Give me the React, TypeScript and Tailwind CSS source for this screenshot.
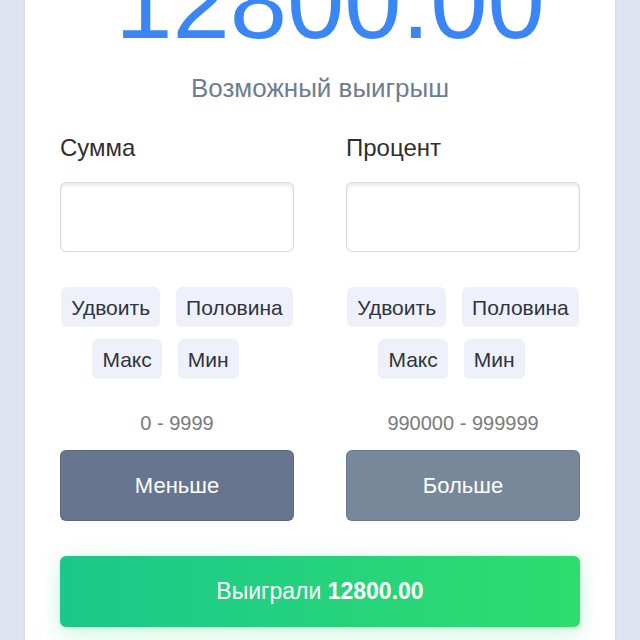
import React from "react"

function SmallButton({ label }: { label: string }) {
  return (
    <button className="h-10 rounded-md bg-[#eef0fa] px-[10px] text-[21px] leading-none text-[#2e3440]">
      {label}
    </button>
  )
}

function Column({
  label,
  range,
  action,
  actionClass,
}: {
  label: string
  range: string
  action: string
  actionClass: string
}) {
  return (
    <div className="flex flex-col">
      <div className="mt-[35px] text-[24px] leading-none text-[#2f2f2f]">{label}</div>
      <input
        className="mt-[22px] h-[70px] w-full rounded-md border border-[#d5d8dd] bg-white shadow-[inset_0_3px_3px_rgba(0,0,0,0.08)] outline-none"
        type="text"
      />
      <div className="mt-[35px] flex flex-col items-center gap-3">
        <div className="flex gap-4">
          <SmallButton label="Удвоить" />
          <SmallButton label="Половина" />
        </div>
        <div className="flex gap-4 pr-[23px]">
          <SmallButton label="Макс" />
          <SmallButton label="Мин" />
        </div>
      </div>
      <div className="mt-[34px] text-center text-[20px] leading-none text-[#7b7b7b]">{range}</div>
      <button
        className={`mt-[17px] h-[71px] w-full rounded-md border border-black/10 text-[22px] text-white ${actionClass}`}
      >
        {action}
      </button>
    </div>
  )
}

export default function App() {
  return (
    <div
      className="h-[640px] overflow-hidden bg-[#dde3f0]"
      style={{ fontFamily: '"Liberation Sans", Arial, sans-serif' }}
    >
      <div className="mx-[25px] min-h-[700px] bg-white px-[35px] pb-10 shadow-[0_0_4px_rgba(0,0,0,0.06)]">
        <div className="-mt-[49px] pl-[20px] text-center text-[103px] leading-none text-[#3a86f4]">12800.00</div>
        <div className="mt-[21px] text-center text-[26px] leading-none text-[#6f7d90]">Возможный выигрыш</div>
        <div className="grid grid-cols-2 gap-[52px]">
          <Column label="Сумма" range="0 - 9999" action="Меньше" actionClass="bg-[#66768e]" />
          <Column label="Процент" range="990000 - 999999" action="Больше" actionClass="bg-[#77889a]" />
        </div>
        <button className="mt-[35px] h-[71px] w-full rounded-md bg-gradient-to-r from-[#1cc78b] to-[#2edd6c] text-[23px] text-white shadow-[0_6px_22px_rgba(46,220,120,0.28)]">
          Выиграли <span className="font-bold">12800.00</span>
        </button>
      </div>
    </div>
  )
}
